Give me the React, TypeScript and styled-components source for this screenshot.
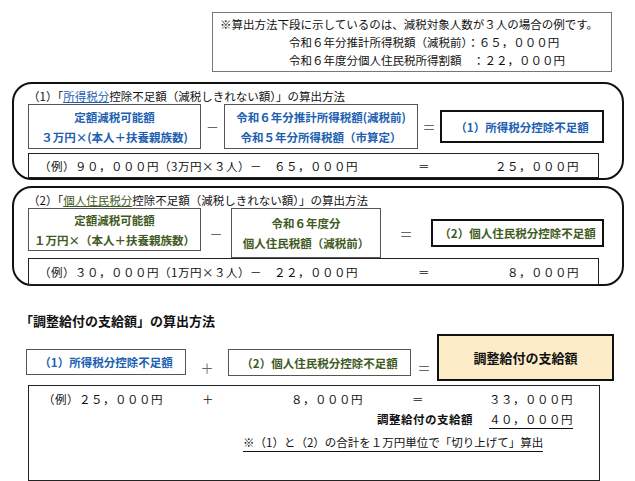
import React from "react";
import styled, { createGlobalStyle } from "styled-components";

const G = createGlobalStyle`
  html, body { margin: 0; padding: 0; background: #fff; }
  body { font-family: "Noto Sans CJK JP", "Noto Sans", sans-serif; color: #111; font-size: 12px; }
`;
const BLUE = "#2060b0";
const GREEN = "#3f5a22";

const Page = styled.div`
  width: 635px; height: 481px; overflow: hidden; position: relative;
  display: flex; flex-direction: column;
`;
const NoteRow = styled.div`display: flex; justify-content: flex-end; padding: 12px 23px 0 0;`;
const Note = styled.div`
  width: 400px; height: 60px; border: 1px solid #777; box-sizing: border-box;
  display: flex; flex-direction: column; align-items: flex-start; padding: 2px 0 0 7px; line-height: 18px; font-size: 11.5px;
`;
const NoteLine = styled.div<{ $indent?: number }>`padding-left: ${(p) => p.$indent ?? 0}px; white-space: pre;`;
const Section = styled.div<{ $h: number; $mt: number }>`
  margin: ${(p) => p.$mt}px 11px 0 12px; height: ${(p) => p.$h}px; box-sizing: border-box;
  border: 2px solid #111; border-radius: 20px; padding: 4px 0 0 14px;
`;
const Title = styled.div`font-size: 11.5px; line-height: 16px; white-space: pre;`;
const U = styled.span<{ $c: string }>`color: ${(p) => p.$c}; text-decoration: underline;`;
const FormRow = styled.div<{ $h: number }>`display: flex; align-items: center; height: ${(p) => p.$h}px;`;
const Box = styled.div<{ $w: number; $h: number; $c: string; $bw?: number; $self?: string; $bg?: string; $fs?: number }>`
  width: ${(p) => p.$w}px; height: ${(p) => p.$h}px; box-sizing: border-box;
  border: ${(p) => p.$bw ?? 1}px solid ${(p) => ((p.$bw ?? 1) > 1 ? "#111" : "#555")};
  background: ${(p) => p.$bg ?? "#fff"};
  color: ${(p) => p.$c}; font-weight: bold; font-size: ${(p) => p.$fs ?? 11.5}px;
  display: flex; flex-direction: column; align-items: center; justify-content: center; line-height: 20px;
  align-self: ${(p) => p.$self ?? "center"}; white-space: pre;
`;
const Op = styled.div<{ $w: number }>`width: ${(p) => p.$w}px; text-align: center; color: #666; font-size: 13px;`;
const Ex = styled.div<{ $h: number }>`
  width: 571px; height: ${(p) => p.$h}px; box-sizing: border-box; border: 1.5px solid #222;
  display: grid; grid-template-columns: 330px 110px 100px; align-items: center; padding-left: 10px;
  font-size: 11.5px; letter-spacing: 0.5px; white-space: pre;
`;
const R = styled.div`text-align: right;`;
const C = styled.div`text-align: center;`;
const H = styled.div`margin: 26px 0 0 20px; font-weight: bold; font-size: 13px; line-height: 18px;`;
const Bottom = styled.div`display: flex; align-items: flex-start; margin: 4px 0 0 26px;`;
const ExBig = styled.div`
  margin: 4px 0 0 28px; width: 572px; height: 120px; box-sizing: border-box; border: 1.5px solid #222;
  padding: 3px 14px 0 14px; font-size: 11.5px; white-space: pre;
`;
const Line = styled.div<{ $h: number }>`display: flex; align-items: center; height: ${(p) => p.$h}px;`;
const Cell = styled.div<{ $w: number; $a?: string }>`width: ${(p) => p.$w}px; text-align: ${(p) => p.$a ?? "left"}; letter-spacing: 0.5px;`;
const Ul = styled.span`border-bottom: 1.5px solid #111; padding-bottom: 1px;`;

export default function App() {
  return (
    <Page>
      <G />
      <NoteRow>
        <Note>
          <NoteLine>※算出方法下段に示しているのは、減税対象人数が３人の場合の例です。</NoteLine>
          <NoteLine $indent={69}>令和６年分推計所得税額（減税前）：６５，０００円</NoteLine>
          <NoteLine $indent={69}>令和６年度分個人住民税所得割額　：２２，０００円</NoteLine>
        </Note>
      </NoteRow>
      <Section $h={104} $mt={10}>
        <Title>（1）「<U $c={BLUE}>所得税分</U>控除不足額（減税しきれない額）」の算出方法</Title>
        <FormRow $h={45}>
          <Box $w={173} $h={45} $c={BLUE}><span>定額減税可能額</span><span>３万円×(本人＋扶養親族数)</span></Box>
          <Op $w={23}>－</Op>
          <Box $w={194} $h={45} $c={BLUE}><span>令和６年分推計所得税額(減税前)</span><span>令和５年分所得税額（市算定）</span></Box>
          <Op $w={22}>＝</Op>
          <Box $w={164} $h={33} $c={BLUE} $bw={2}>（1）所得税分控除不足額</Box>
        </FormRow>
        <div style={{ height: 4 }} />
        <Ex $h={25}><span>（例）９０，０００円（3万円×３人）－　６５，０００円</span><C>＝</C><R>２５，０００円</R></Ex>
      </Section>
      <Section $h={100} $mt={6}>
        <Title>（2）「<U $c={GREEN}>個人住民税分</U>控除不足額（減税しきれない額）」の算出方法</Title>
        <FormRow $h={50}>
          <Box $w={173} $h={43} $c={GREEN} $self="flex-start"><span>定額減税可能額</span><span>１万円×（本人＋扶養親族数）</span></Box>
          <Op $w={30}>－</Op>
          <Box $w={150} $h={50} $c={GREEN}><span>令和６年度分</span><span>個人住民税額（減税前）</span></Box>
          <Op $w={50}>＝</Op>
          <Box $w={173} $h={28} $c={GREEN} $bw={2}>（2）個人住民税分控除不足額</Box>
        </FormRow>
        <Ex $h={27}><span>（例）３０，０００円（1万円×３人）－　２２，０００円</span><C>＝</C><R>８，０００円</R></Ex>
      </Section>
      <H>「調整給付の支給額」の算出方法</H>
      <Bottom>
        <Box $w={160} $h={26} $c={BLUE} $self="flex-start" style={{ marginTop: 15 }}>（1）所得税分控除不足額</Box>
        <Op $w={42} style={{ marginTop: 24 }}>＋</Op>
        <Box $w={183} $h={27} $c={GREEN} $self="flex-start" style={{ marginTop: 15 }}>（2）個人住民税分控除不足額</Box>
        <Op $w={26} style={{ marginTop: 24 }}>＝</Op>
        <Box $w={177} $h={47} $c="#111" $bw={2} $bg="#fdecc8" $fs={13}>調整給付の支給額</Box>
      </Bottom>
      <ExBig>
        <Line $h={20}><Cell $w={130}>（例）２５，０００円</Cell><Cell $w={70} $a="center">＋</Cell><Cell $w={120} $a="right">８，０００円</Cell><Cell $w={110} $a="center">＝</Cell><Cell $w={100} $a="right">３３，０００円</Cell></Line>
        <Line $h={20}><Cell $w={330} /><Cell $w={100} $a="right"><b>調整給付の支給額</b></Cell><Cell $w={100} $a="right"><Ul>４０，０００円</Ul></Cell></Line>
        <Line $h={28}><Cell $w={200} /><Ul>※（1）と（2）の合計を１万円単位で「切り上げて」算出</Ul></Line>
      </ExBig>
    </Page>
  );
}
